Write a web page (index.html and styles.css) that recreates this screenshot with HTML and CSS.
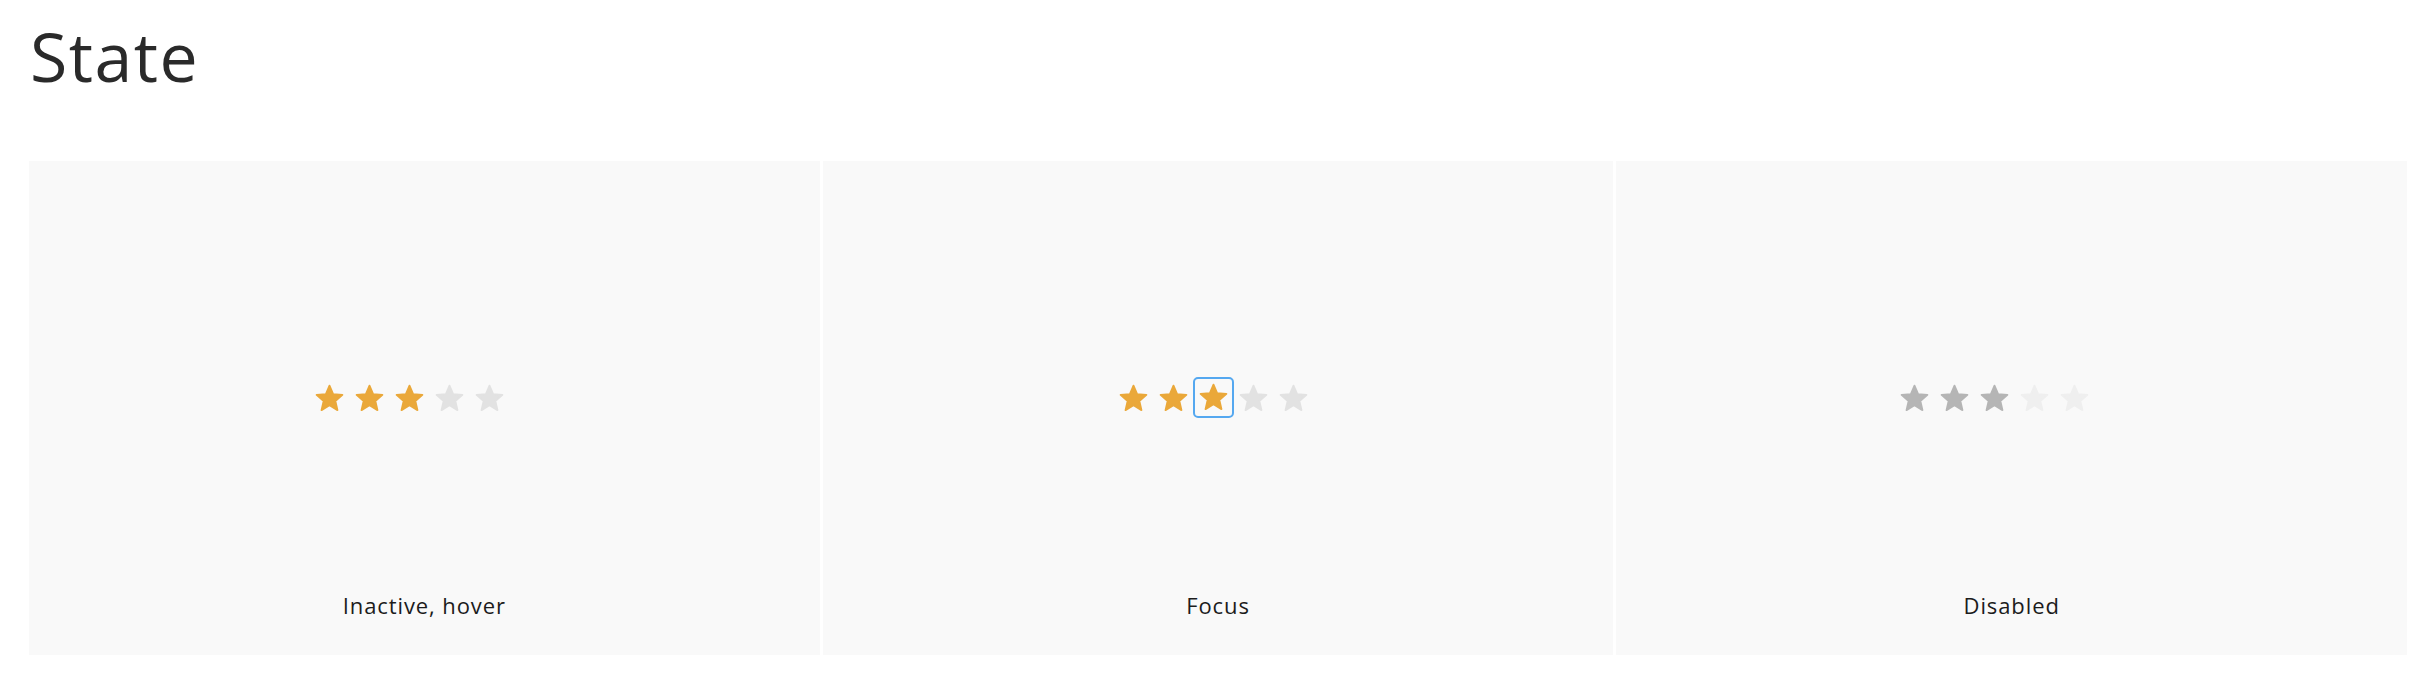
FILE: index.html
```html
<!DOCTYPE html>
<html lang="en">
<head>
<meta charset="utf-8">
<title>State</title>
<link rel="stylesheet" href="styles.css">
</head>
<body>
<svg class="defs" width="0" height="0" aria-hidden="true">
  <symbol id="star" viewBox="0 0 24 24">
    <path d="M12 17.27L18.18 21l-1.64-7.03L22 9.24l-7.19-.61L12 2 9.19 8.63 2 9.24l5.46 4.73L5.82 21z" fill="currentColor" stroke="currentColor" stroke-width="1.4" stroke-linejoin="round"/>
  </symbol>
</svg>
<h1 class="title">State</h1>
<div class="panels">
  <section class="panel">
    <div class="stars stars--a">
      <span class="star on"><svg><use href="#star"/></svg></span>
      <span class="star on"><svg><use href="#star"/></svg></span>
      <span class="star on"><svg><use href="#star"/></svg></span>
      <span class="star off"><svg><use href="#star"/></svg></span>
      <span class="star off"><svg><use href="#star"/></svg></span>
    </div>
    <p class="label">Inactive, hover</p>
  </section>
  <section class="panel">
    <div class="stars stars--b">
      <span class="star on"><svg><use href="#star"/></svg></span>
      <span class="star on"><svg><use href="#star"/></svg></span>
      <span class="star on focus"><svg><use href="#star"/></svg></span>
      <span class="star off"><svg><use href="#star"/></svg></span>
      <span class="star off"><svg><use href="#star"/></svg></span>
    </div>
    <p class="label">Focus</p>
  </section>
  <section class="panel">
    <div class="stars stars--c">
      <span class="star dis-on"><svg><use href="#star"/></svg></span>
      <span class="star dis-on"><svg><use href="#star"/></svg></span>
      <span class="star dis-on"><svg><use href="#star"/></svg></span>
      <span class="star dis-off"><svg><use href="#star"/></svg></span>
      <span class="star dis-off"><svg><use href="#star"/></svg></span>
    </div>
    <p class="label">Disabled</p>
  </section>
</div>
</body>
</html>
```
FILE: styles.css
```css
html, body {
  margin: 0;
  padding: 0;
  background: #ffffff;
}

.defs {
  position: absolute;
  width: 0;
  height: 0;
  overflow: hidden;
}

.title {
  margin: 0;
  padding: 22px 0 0 30px;
  height: 68px;
  font-family: "Open Sans", sans-serif;
  font-weight: 400;
  font-size: 68px;
  line-height: 68px;
  letter-spacing: 1.5px;
  color: #2a2a2a;
}

.panels {
  display: grid;
  grid-template-columns: repeat(3, 1fr);
  gap: 3px;
  margin: 71px 23px 0 29px;
}

.panel {
  height: 494px;
  background: #f9f9f9;
  display: flex;
  flex-direction: column;
  align-items: center;
  box-sizing: border-box;
  padding-top: 217px;
}

.stars {
  display: flex;
  height: 40px;
}

.stars--a { margin-right: 29px; }
.stars--b { margin-right: 9px; }
.stars--c { margin-right: 34px; }

.star {
  width: 40px;
  height: 40px;
  display: flex;
  align-items: center;
  justify-content: center;
  box-sizing: border-box;
}

.star svg {
  width: 31px;
  height: 31px;
  display: block;
}

.star.on { color: #eaa83a; }
.star.off { color: #e2e2e2; }
.star.dis-on { color: #b5b5b5; }
.star.dis-off { color: #efefef; }

.star.focus {
  border: 2px solid #55a8f0;
  border-radius: 5px;
  width: 41px;
  height: 41px;
  margin: -1px -0.5px 0 -0.5px;
}

.label {
  margin: 172px 0 0;
  font-family: "Open Sans", sans-serif;
  font-size: 22px;
  line-height: 30px;
  letter-spacing: 0.9px;
  color: #1c1c1c;
}
```
